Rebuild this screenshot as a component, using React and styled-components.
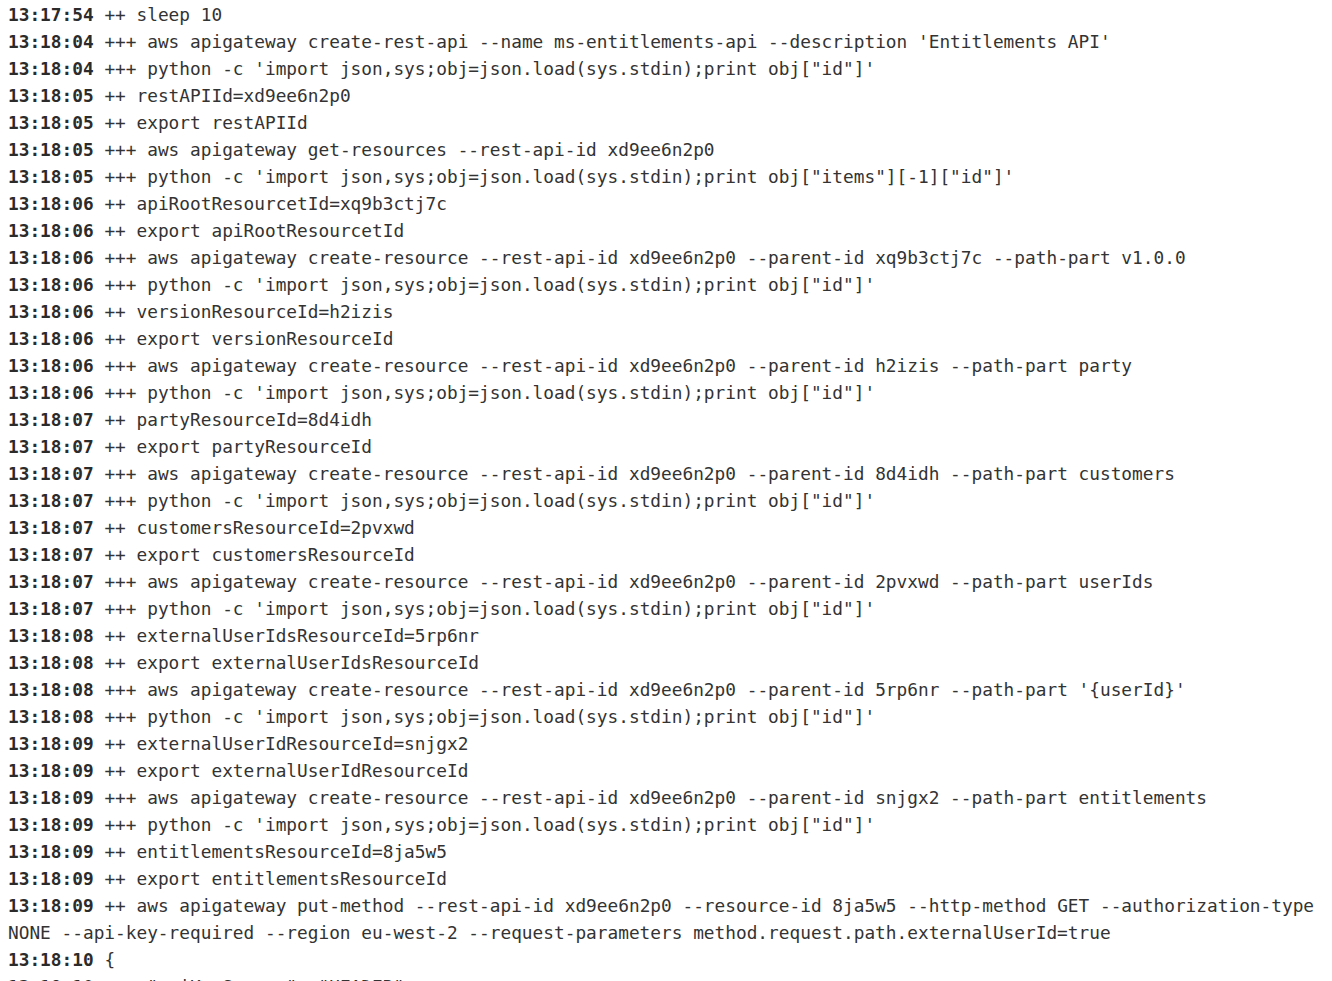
import styled, { createGlobalStyle } from "styled-components";

const GlobalStyle = createGlobalStyle`
  html, body {
    margin: 0;
    padding: 0;
    background: #ffffff;
    overflow: hidden;
  }
`;

const lines = [
  ["13:17:54", "++ sleep 10"],
  ["13:18:04", "+++ aws apigateway create-rest-api --name ms-entitlements-api --description 'Entitlements API'"],
  ["13:18:04", "+++ python -c 'import json,sys;obj=json.load(sys.stdin);print obj[\"id\"]'"],
  ["13:18:05", "++ restAPIId=xd9ee6n2p0"],
  ["13:18:05", "++ export restAPIId"],
  ["13:18:05", "+++ aws apigateway get-resources --rest-api-id xd9ee6n2p0"],
  ["13:18:05", "+++ python -c 'import json,sys;obj=json.load(sys.stdin);print obj[\"items\"][-1][\"id\"]'"],
  ["13:18:06", "++ apiRootResourcetId=xq9b3ctj7c"],
  ["13:18:06", "++ export apiRootResourcetId"],
  ["13:18:06", "+++ aws apigateway create-resource --rest-api-id xd9ee6n2p0 --parent-id xq9b3ctj7c --path-part v1.0.0"],
  ["13:18:06", "+++ python -c 'import json,sys;obj=json.load(sys.stdin);print obj[\"id\"]'"],
  ["13:18:06", "++ versionResourceId=h2izis"],
  ["13:18:06", "++ export versionResourceId"],
  ["13:18:06", "+++ aws apigateway create-resource --rest-api-id xd9ee6n2p0 --parent-id h2izis --path-part party"],
  ["13:18:06", "+++ python -c 'import json,sys;obj=json.load(sys.stdin);print obj[\"id\"]'"],
  ["13:18:07", "++ partyResourceId=8d4idh"],
  ["13:18:07", "++ export partyResourceId"],
  ["13:18:07", "+++ aws apigateway create-resource --rest-api-id xd9ee6n2p0 --parent-id 8d4idh --path-part customers"],
  ["13:18:07", "+++ python -c 'import json,sys;obj=json.load(sys.stdin);print obj[\"id\"]'"],
  ["13:18:07", "++ customersResourceId=2pvxwd"],
  ["13:18:07", "++ export customersResourceId"],
  ["13:18:07", "+++ aws apigateway create-resource --rest-api-id xd9ee6n2p0 --parent-id 2pvxwd --path-part userIds"],
  ["13:18:07", "+++ python -c 'import json,sys;obj=json.load(sys.stdin);print obj[\"id\"]'"],
  ["13:18:08", "++ externalUserIdsResourceId=5rp6nr"],
  ["13:18:08", "++ export externalUserIdsResourceId"],
  ["13:18:08", "+++ aws apigateway create-resource --rest-api-id xd9ee6n2p0 --parent-id 5rp6nr --path-part '{userId}'"],
  ["13:18:08", "+++ python -c 'import json,sys;obj=json.load(sys.stdin);print obj[\"id\"]'"],
  ["13:18:09", "++ externalUserIdResourceId=snjgx2"],
  ["13:18:09", "++ export externalUserIdResourceId"],
  ["13:18:09", "+++ aws apigateway create-resource --rest-api-id xd9ee6n2p0 --parent-id snjgx2 --path-part entitlements"],
  ["13:18:09", "+++ python -c 'import json,sys;obj=json.load(sys.stdin);print obj[\"id\"]'"],
  ["13:18:09", "++ entitlementsResourceId=8ja5w5"],
  ["13:18:09", "++ export entitlementsResourceId"],
  ["13:18:09", "++ aws apigateway put-method --rest-api-id xd9ee6n2p0 --resource-id 8ja5w5 --http-method GET --authorization-type NONE --api-key-required --region eu-west-2 --request-parameters method.request.path.externalUserId=true"],
  ["13:18:10", "{"],
  ["13:18:10", "    \"apiKeySource\": \"HEADER\","],
];

const App = () => {
  return (
    <>
      <GlobalStyle />
      <Log>
        {lines.map(([time, text], i) => (
          <Line key={i}>
            <Time>{time}</Time> {text}
          </Line>
        ))}
      </Log>
    </>
  );
};

const Log = styled.div`
  padding: 1px 8px 0;
  font-family: "DejaVu Sans Mono", "Liberation Mono", monospace;
  font-size: 17.8px;
  line-height: 27px;
  color: #333333;
`;

const Line = styled.div`
  white-space: pre-wrap;
  word-break: normal;
`;

const Time = styled.b`
  font-weight: bold;
  color: #2b2b2b;
`;

export default App;
